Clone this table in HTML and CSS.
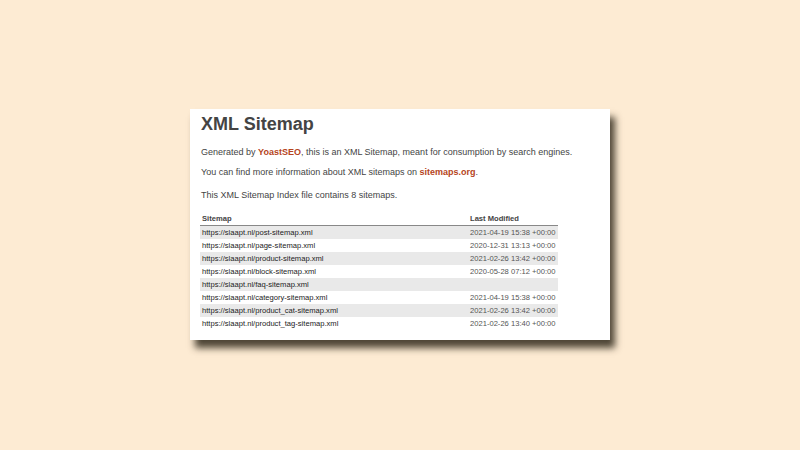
FILE: index.html
```html
<!DOCTYPE html>
<html>
<head>
<meta charset="utf-8">
<link rel="stylesheet" href="styles.css">
</head>
<body>
<div class="card">
  <h1 class="title">XML Sitemap</h1>
  <p class="desc first">Generated by <a class="link">YoastSEO</a>, this is an XML Sitemap, meant for consumption by search engines.</p>
  <p class="desc">You can find more information about XML sitemaps on <a class="link">sitemaps.org</a>.</p>
  <p class="desc count">This XML Sitemap Index file contains 8 sitemaps.</p>
  <table class="sitemaps">
    <thead>
      <tr><th class="col-url">Sitemap</th><th class="col-date">Last Modified</th></tr>
    </thead>
    <tbody>
      <tr><td>https://slaapt.nl/post-sitemap.xml</td><td>2021-04-19 15:38 +00:00</td></tr>
      <tr><td>https://slaapt.nl/page-sitemap.xml</td><td>2020-12-31 13:13 +00:00</td></tr>
      <tr><td>https://slaapt.nl/product-sitemap.xml</td><td>2021-02-26 13:42 +00:00</td></tr>
      <tr><td>https://slaapt.nl/block-sitemap.xml</td><td>2020-05-28 07:12 +00:00</td></tr>
      <tr><td>https://slaapt.nl/faq-sitemap.xml</td><td></td></tr>
      <tr><td>https://slaapt.nl/category-sitemap.xml</td><td>2021-04-19 15:38 +00:00</td></tr>
      <tr><td>https://slaapt.nl/product_cat-sitemap.xml</td><td>2021-02-26 13:42 +00:00</td></tr>
      <tr><td>https://slaapt.nl/product_tag-sitemap.xml</td><td>2021-02-26 13:40 +00:00</td></tr>
    </tbody>
  </table>
</div>
</body>
</html>
```
FILE: styles.css
```css
html, body {
  margin: 0;
  padding: 0;
}
body {
  width: 800px;
  height: 450px;
  background: #fdebd3;
  display: flex;
  justify-content: center;
  align-items: flex-start;
  font-family: "Liberation Sans", Arial, sans-serif;
  color: #444;
  overflow: hidden;
}
.card {
  margin-top: 109px;
  width: 420px;
  height: 231px;
  box-sizing: border-box;
  background: #fff;
  padding: 2px 10px 0 11px;
  box-shadow: 5px 8px 7px rgba(60, 52, 38, 0.9);
}
.title {
  margin: 0;
  font-size: 18px;
  line-height: 26px;
  font-weight: bold;
  color: #444;
}
.desc {
  margin: 0;
  margin-top: 7px;
  font-size: 9px;
  line-height: 13px;
  color: #444;
}
.desc.first { margin-top: 9px; }
.desc.count { margin-top: 10px; }
.link {
  color: #b5441c;
  font-weight: bold;
  text-decoration: none;
}
.sitemaps {
  margin-top: 10px;
  width: 358px;
  margin-left: -1px;
  border-collapse: collapse;
  font-size: 7.6px;
  color: #222;
}
.sitemaps th {
  text-align: left;
  font-weight: bold;
  color: #444;
  height: 13px;
  padding: 0 2px;
  border-bottom: 1px solid #888;
  vertical-align: middle;
}
.sitemaps td {
  height: 13px;
  padding: 0 2px;
  vertical-align: middle;
  color: #222;
}
.sitemaps td + td { color: #555; }
.col-date { width: 86px; }
.sitemaps tbody tr:nth-child(odd) { background: #e9e9e9; }
```
